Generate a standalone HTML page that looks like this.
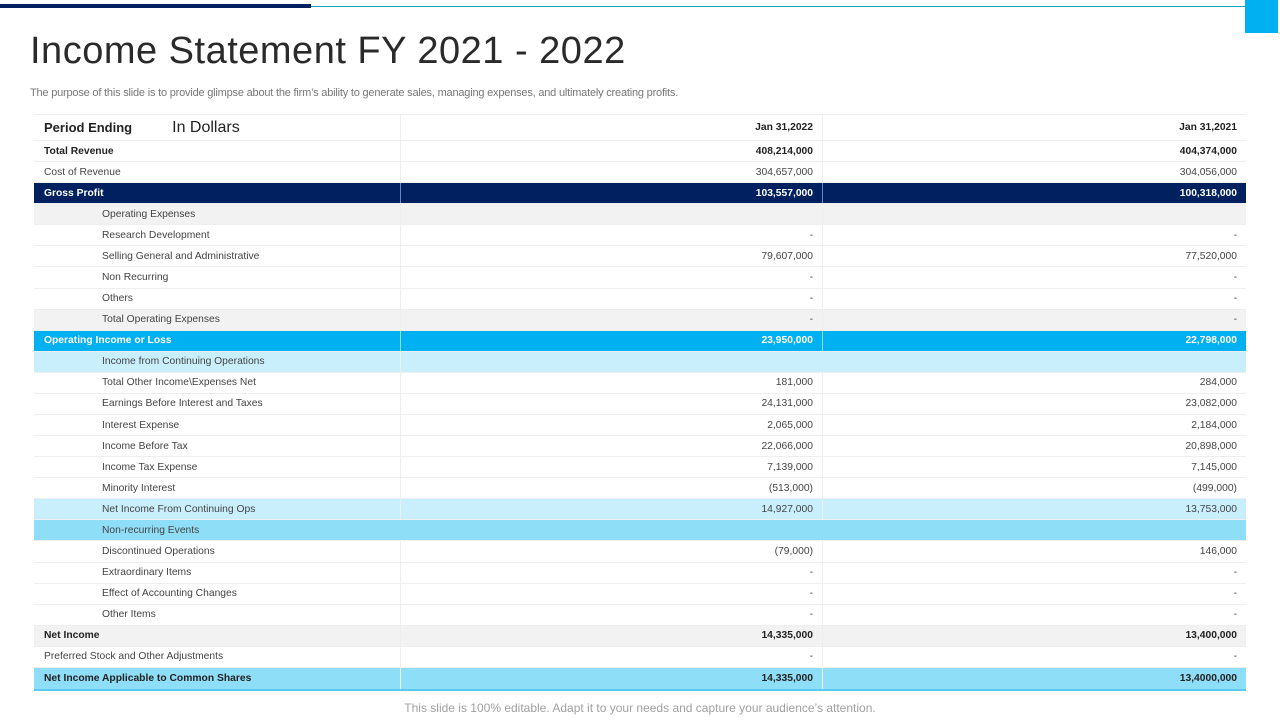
<!DOCTYPE html>
<html><head><meta charset="utf-8"><style>
*{margin:0;padding:0;box-sizing:border-box}
body{width:1280px;height:720px;background:#fff;position:relative;overflow:hidden;font-family:"Liberation Sans",Arial,sans-serif}
.bar1{position:absolute;left:0;top:4px;width:311px;height:4px;background:#002060}
.bar2{position:absolute;left:311px;top:6px;width:934px;height:1px;background:#1aa3b8}
.sq{position:absolute;left:1245px;top:0;width:33px;height:33px;background:#00b0f0}
h1{position:absolute;left:30px;top:30px;font-size:38px;font-weight:normal;color:#2a2a2a;letter-spacing:0.5px;white-space:nowrap}
.sub{position:absolute;left:30px;top:87px;font-size:11px;color:#777;white-space:nowrap;letter-spacing:-0.2px}
.tbl{position:absolute;left:34px;top:114px;width:1212px;border-top:1px solid #eee;border-bottom:2px solid #5bc8ee}
.r{display:flex;height:21.08px;border-bottom:1px solid #eee;font-size:10.3px;color:#444;align-items:center}
.r>div{height:100%;display:flex;align-items:center}
.c1{width:367px;padding-left:10px;border-right:1px solid #eee}
.c2{width:422px;justify-content:flex-end;padding-right:9px;border-right:1px solid #eee}
.c3{width:423px;justify-content:flex-end;padding-right:9px}
.in .c1{padding-left:68px}
.b{font-weight:bold;color:#222}
.g{background:#f2f2f2}
.nv{background:#002060;color:#fff;font-weight:bold}
.nv>div{border-color:#6b87c0}
.bl{background:#00b0f0;color:#fff;font-weight:bold}
.bl>div{border-color:#8fdcf7}
.lb{background:#c9effc}
.mb{background:#8fdef8}
.hd{height:26px;font-size:13px;font-weight:bold;color:#222}
.hd .c2,.hd .c3{font-size:10.3px}
.foot{position:absolute;left:0;width:1280px;text-align:center;top:701px;font-size:12px;color:#a0a0a0}
</style></head><body>
<div class="bar1"></div><div class="bar2"></div><div class="sq"></div>
<h1>Income Statement FY 2021 - 2022</h1>
<div class="sub">The purpose of this slide is to provide glimpse about the firm’s ability to generate sales, managing expenses, and ultimately creating profits.</div>
<div class="tbl">
<div class="r hd"><div class="c1">Period Ending<span style="margin-left:40px;font-size:16px;font-weight:normal;color:#222">In Dollars</span></div><div class="c2">Jan 31,2022</div><div class="c3">Jan 31,2021</div></div>
<div class="r b"><div class="c1">Total Revenue</div><div class="c2">408,214,000</div><div class="c3">404,374,000</div></div>
<div class="r"><div class="c1">Cost of Revenue</div><div class="c2">304,657,000</div><div class="c3">304,056,000</div></div>
<div class="r nv"><div class="c1">Gross Profit</div><div class="c2">103,557,000</div><div class="c3">100,318,000</div></div>
<div class="r in g"><div class="c1">Operating Expenses</div><div class="c2"></div><div class="c3"></div></div>
<div class="r in"><div class="c1">Research Development</div><div class="c2">-</div><div class="c3">-</div></div>
<div class="r in"><div class="c1">Selling General and Administrative</div><div class="c2">79,607,000</div><div class="c3">77,520,000</div></div>
<div class="r in"><div class="c1">Non Recurring</div><div class="c2">-</div><div class="c3">-</div></div>
<div class="r in"><div class="c1">Others</div><div class="c2">-</div><div class="c3">-</div></div>
<div class="r in g"><div class="c1">Total Operating Expenses</div><div class="c2">-</div><div class="c3">-</div></div>
<div class="r bl"><div class="c1">Operating Income or Loss</div><div class="c2">23,950,000</div><div class="c3">22,798,000</div></div>
<div class="r in lb"><div class="c1">Income from Continuing Operations</div><div class="c2" style="border:0"></div><div class="c3"></div></div>
<div class="r in"><div class="c1">Total Other Income\Expenses Net</div><div class="c2">181,000</div><div class="c3">284,000</div></div>
<div class="r in"><div class="c1">Earnings Before Interest and Taxes</div><div class="c2">24,131,000</div><div class="c3">23,082,000</div></div>
<div class="r in"><div class="c1">Interest Expense</div><div class="c2">2,065,000</div><div class="c3">2,184,000</div></div>
<div class="r in"><div class="c1">Income Before Tax</div><div class="c2">22,066,000</div><div class="c3">20,898,000</div></div>
<div class="r in"><div class="c1">Income Tax Expense</div><div class="c2">7,139,000</div><div class="c3">7,145,000</div></div>
<div class="r in"><div class="c1">Minority Interest</div><div class="c2">(513,000)</div><div class="c3">(499,000)</div></div>
<div class="r in lb"><div class="c1">Net Income From Continuing Ops</div><div class="c2">14,927,000</div><div class="c3">13,753,000</div></div>
<div class="r in mb"><div class="c1" style="border:0">Non-recurring Events</div><div class="c2" style="border:0"></div><div class="c3"></div></div>
<div class="r in"><div class="c1">Discontinued Operations</div><div class="c2">(79,000)</div><div class="c3">146,000</div></div>
<div class="r in"><div class="c1">Extraordinary Items</div><div class="c2">-</div><div class="c3">-</div></div>
<div class="r in"><div class="c1">Effect of Accounting Changes</div><div class="c2">-</div><div class="c3">-</div></div>
<div class="r in"><div class="c1">Other Items</div><div class="c2">-</div><div class="c3">-</div></div>
<div class="r b g"><div class="c1">Net Income</div><div class="c2">14,335,000</div><div class="c3">13,400,000</div></div>
<div class="r"><div class="c1">Preferred Stock and Other Adjustments</div><div class="c2">-</div><div class="c3">-</div></div>
<div class="r b mb" style="border:0"><div class="c1">Net Income Applicable to Common Shares</div><div class="c2">14,335,000</div><div class="c3">13,4000,000</div></div>
</div>
<div class="foot">This slide is 100% editable. Adapt it to your needs and capture your audience’s attention.</div>
</body></html>
